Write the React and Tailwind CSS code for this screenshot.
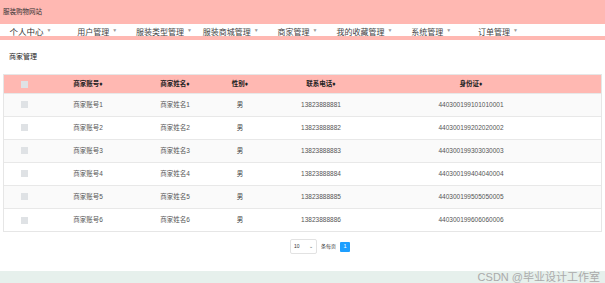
import React from 'react';

const navItems = ['个人中心', '用户管理', '服装类型管理', '服装商城管理', '商家管理', '我的收藏管理', '系统管理', '订单管理'];

const rows = [1, 2, 3, 4, 5, 6].map((n) => ({
  account: `商家账号${n}`,
  name: `商家姓名${n}`,
  sex: '男',
  phone: `1382388888${n}`,
  idcard: `44030019${90 + n}0${n}0${n}000${n}`,
}));

const font = { fontFamily: '"Liberation Sans", "Noto Sans CJK SC", sans-serif' };

function Caret() {
  return <span className="ml-[3px] inline-block text-[5px] text-[#999] align-middle">▼</span>;
}

export default function App() {
  return (
    <div className="w-[605px] h-[283px] bg-white flex flex-col overflow-hidden" style={font}>
      {/* 顶部标题 */}
      <div className="h-[24px] bg-[#ffb8b2] flex items-center pl-[3px]">
        <span className="text-[6.5px] text-[#333]">服装购物网站</span>
      </div>

      {/* 导航 */}
      <div className="h-[12px] bg-white flex items-center ml-[-3px]">
        {navItems.map((item, i) => (
          <div key={item} className="w-[66.8px] shrink-0 text-center leading-none">
            <span className={i === 0 ? 'text-[8.5px] text-[#333]' : 'text-[8px] text-[#444]'}>{item}</span>
            <Caret />
          </div>
        ))}
      </div>
      <div className="h-[4px] bg-[#ffb8b2]" />

      {/* 面包屑 */}
      <div className="h-[34px] flex items-center pl-[9px]">
        <span className="text-[7px] text-[#222]">商家管理</span>
      </div>

      {/* 表格 */}
      <div className="mx-[3px] border border-[#e6e6e6]">
        <table className="w-full table-fixed border-collapse text-[6.5px]">
          <colgroup>
            <col className="w-[40px]" />
            <col className="w-[88px]" />
            <col className="w-[86px]" />
            <col className="w-[44px]" />
            <col className="w-[118px]" />
            <col className="w-[182px]" />
            <col />
          </colgroup>
          <thead>
            <tr className="h-[18px] bg-[#ffb8b2] text-[#222] font-bold">
              <th className="font-bold"><span className="inline-block w-[7px] h-[7px] bg-[#dfe2e5] align-middle" /></th>
              <th className="font-bold">商家账号♦</th>
              <th className="font-bold">商家姓名♦</th>
              <th className="font-bold">性别♦</th>
              <th className="font-bold">联系电话♦</th>
              <th className="font-bold">身份证♦</th>
              <th />
            </tr>
          </thead>
          <tbody>
            {rows.map((r, i) => (
              <tr key={r.account} className={`h-[23px] border-t border-[#e8e8e8] text-[#555] ${i % 2 === 0 ? 'bg-[#fafafa]' : 'bg-white'}`}>
                <td className="text-center"><span className="inline-block w-[7px] h-[7px] bg-[#dfe2e5] align-middle" /></td>
                <td className="text-center">{r.account}</td>
                <td className="text-center">{r.name}</td>
                <td className="text-center text-[#333]">{r.sex}</td>
                <td className="text-center">{r.phone}</td>
                <td className="text-center">{r.idcard}</td>
                <td />
              </tr>
            ))}
          </tbody>
        </table>
      </div>

      {/* 分页 */}
      <div className="mt-[7px] flex items-center pl-[290px] gap-[4px]">
        <div className="w-[27px] h-[15px] border border-[#e2e2e2] rounded-[2px] flex items-center justify-between px-[3px]">
          <span className="text-[5px] text-[#333]">10</span>
          <span className="text-[5px] text-[#555]">⌄</span>
        </div>
        <span className="text-[5px] text-[#333]">条每页</span>
        <div className="w-[10px] h-[10px] bg-[#1e9fff] rounded-[1px] flex items-center justify-center">
          <span className="text-[5.5px] text-white">1</span>
        </div>
      </div>

      <div className="flex-1" />

      {/* 底部 */}
      <div className="h-[12px] bg-[#e6f0ec] flex items-center justify-end pr-[5px]">
        <span className="text-[11px] text-[#aaa] leading-none">CSDN @毕业设计工作室</span>
      </div>
    </div>
  );
}
